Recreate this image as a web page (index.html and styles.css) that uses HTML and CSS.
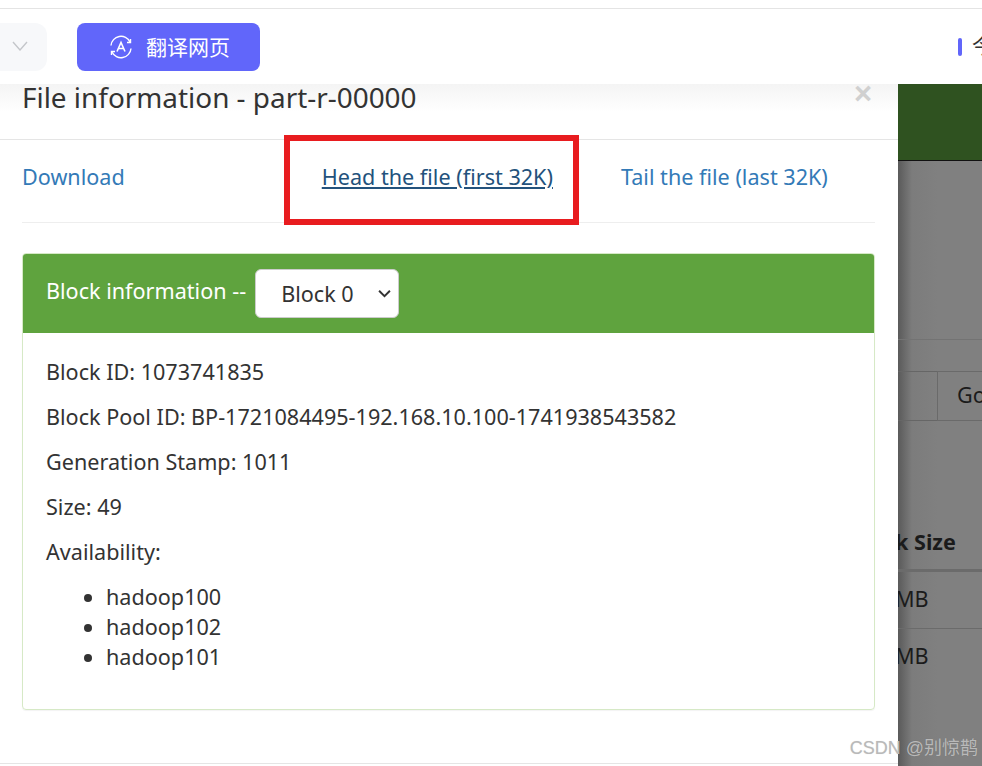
FILE: index.html
```html
<!DOCTYPE html>
<html lang="en">
<head>
<meta charset="utf-8">
<title>File information</title>
<link rel="stylesheet" href="styles.css">
</head>
<body>
<header class="toolbar">
  <div class="toolbar-row">
    <div class="chevron-box">
      <svg class="chevron" viewBox="0 0 16 10" width="16" height="10"><path d="M1 1l7 8 7-8" fill="none" stroke="#c4c6ca" stroke-width="1.4"/></svg>
    </div>
    <button class="translate-btn">
      <svg class="translate-icon" viewBox="0 0 24 24" width="24" height="24" fill="none" stroke="#fff" stroke-width="1.4">
        <path d="M2 10.500A10 10 0 0 1 21 7"/><path d="M22 13.500A10 10 0 0 1 3 17"/>
        <path d="M21.500 4V7.500H18"/><path d="M2.500 20V16.500H6"/>
        <path d="M8 16.500L12 7.500l4 9M9.300 13.500h5.400" stroke-width="1.6"/>
      </svg>
      <span class="translate-label">翻译网页</span>
    </button>
    <div class="ai-mark"></div>
    <span class="ai-text">今</span>
  </div>
</header>
<main class="stage">
  <section class="modal">
    <div class="modal-header">
      <h4 class="modal-title">File information - part-r-00000</h4>
      <span class="close">×</span>
    </div>
    <div class="modal-body">
      <div class="links">
        <a class="link link-download" href="#">Download</a>
        <a class="link link-head" href="#">Head the file (first 32K)</a>
        <a class="link link-tail" href="#">Tail the file (last 32K)</a>
      </div>
      <hr class="rule">
      <div class="panel">
        <div class="panel-heading">
          <span class="panel-title">Block information --</span>
          <div class="select-box"><span>Block 0</span>
            <svg viewBox="0 0 12 8" width="13" height="9"><path d="M1 1.500l5 5 5-5" fill="none" stroke="#333" stroke-width="1.800"/></svg>
          </div>
        </div>
        <div class="panel-body">
          <p>Block ID: 1073741835</p>
          <p>Block Pool ID: BP-1721084495-192.168.10.100-1741938543582</p>
          <p>Generation Stamp: 1011</p>
          <p>Size: 49</p>
          <p>Availability:</p>
          <ul>
            <li>hadoop100</li>
            <li>hadoop102</li>
            <li>hadoop101</li>
          </ul>
        </div>
      </div>
    </div>
    <div class="red-box"></div>
  </section>
  <aside class="backdrop">
    <div class="bd-green"></div>
    <div class="bd-rule-a"></div>
    <div class="bd-input">
      <div class="bd-field"></div>
      <div class="bd-go">Go</div>
    </div>
    <div class="bd-th"><span>k Size</span></div>
    <div class="bd-td bd-td-first"><span>MB</span></div>
    <div class="bd-td"><span>MB</span></div>
  </aside>
</main>
<div class="watermark">CSDN @别惊鹊</div>
</body>
</html>
```
FILE: styles.css
```css
* { box-sizing: border-box; }
html, body { margin: 0; height: 100%; overflow: hidden; }
body {
  width: 982px;
  height: 766px;
  background: #fff;
  font-family: "Noto Sans", "Noto Sans CJK SC", sans-serif;
  color: #333;
  position: relative;
}
.toolbar {
  height: 84px;
  padding-top: 8px;
  background: #fff;
  position: relative;
  z-index: 2;
}
.toolbar-row {
  height: 76px;
  border-top: 1px solid #e4e4e4;
  display: flex;
  align-items: flex-start;
  padding-top: 14px;
  overflow: hidden;
}
.chevron-box {
  flex: none;
  width: 47px;
  height: 48px;
  background: #f7f8fa;
  border-radius: 0 12px 12px 0;
  display: flex;
  align-items: center;
  justify-content: center;
  padding-right: 7px;
  padding-bottom: 2px;
}
.translate-btn {
  flex: none;
  margin-left: 30px;
  width: 183px;
  height: 48px;
  border: 0;
  border-radius: 8px;
  background: #6166fa;
  color: #fff;
  font: 400 21px "Noto Sans CJK SC", sans-serif;
  display: flex;
  align-items: center;
  gap: 13px;
  padding: 0 0 0 32px;
}
.translate-icon { flex: none; }
.translate-label { margin-top: -2px; }
.ai-mark {
  width: 4px;
  height: 18px;
  margin: 15px 0 0 698px;
  background: #6166fa;
  border-radius: 2px;
  flex: none;
}
.ai-text {
  margin: 8px 0 0 10px;
  font: 20px "Noto Sans CJK SC", sans-serif;
  flex: none;
}
.stage {
  display: flex;
  height: 682px;
}
.modal {
  width: 898px;
  flex: none;
  position: relative;
  background: linear-gradient(#f4f4f4, #fff 28px);
  border-bottom: 1px solid #e5e5e5;
  height: 680px;
}
.modal-header {
  height: 56px;
  border-bottom: 1px solid #e5e5e5;
  padding-left: 22px;
  position: relative;
}
.modal-title {
  margin: 0;
  font-size: 27.900px;
  font-weight: 400;
  line-height: 27px;
}
.close {
  position: absolute;
  left: 854px;
  top: -8px;
  font: 700 31px/36px "Liberation Sans", sans-serif;
  color: #d0d0d0;
}
.modal-body { padding: 0 23px 0 22px; }
.links {
  display: flex;
  height: 82px;
  padding-bottom: 9px;
  align-items: center;
  font-size: 21.600px;
}
.link { color: #337ab7; text-decoration: none; }
.link-head { margin-left: 197px; color: #23527c; text-decoration: underline; }
.link-tail { margin-left: 68px; }
.rule { margin: 0; border: 0; border-top: 1px solid #eee; }
.panel {
  margin-top: 30px;
  height: 457px;
  border: 1px solid #d6e9c6;
  border-radius: 4px;
  box-shadow: 0 1px 1px rgba(0, 0, 0, .05);
  overflow: hidden;
}
.panel-heading {
  height: 79px;
  margin: 0 -1px;
  background: #5fa33e;
  color: #fff;
  display: flex;
  align-items: center;
  padding-left: 24px;
  font-size: 21.600px;
}
.panel-title { margin-top: -6px; }
.select-box {
  flex: none;
  width: 144px;
  height: 49px;
  margin: 0 0 0 9px;
  background: #fff;
  border: 1px solid #ccc;
  border-radius: 6px;
  color: #333;
  display: flex;
  align-items: center;
  justify-content: space-between;
  padding: 0 7px 0 25px;
  font-size: 21.600px;
}
.panel-body { padding: 24px 23px 0; font-size: 21.600px; line-height: 30px; }
.panel-body p { margin: 0 0 15px; }
.panel-body ul { margin: 0; padding-left: 60px; }
.red-box {
  position: absolute;
  left: 284px;
  top: 51px;
  width: 295px;
  height: 90px;
  border: 6px solid #e81c1f;
}
.backdrop {
  flex: 1;
  background: linear-gradient(90deg, #5a5a5a, #7c7c7c 14px, #808080 40px);
  font-size: 21.600px;
  color: #1b1b1b;
  overflow: hidden;
}
.bd-green {
  height: 77px;
  background: #2f5220;
  border-bottom: 1px solid #111;
}
.bd-rule-a { height: 1px; margin-top: 178px; background: #737373; }
.bd-input { display: flex; height: 50px; margin-top: 31px; }
.bd-field { width: 39px; flex: none; border-top: 1px solid #666; border-bottom: 1px solid #666; }
.bd-go {
  flex: 1;
  border: 1px solid #6a6a6a;
  border-right: 0;
  padding-left: 19px;
  line-height: 46px;
  white-space: nowrap;
}
.bd-th {
  height: 100px;
  margin-top: 51px;
  padding-top: 55px;
  border-bottom: 3px solid #6b6b6b;
  font-weight: 700;
  white-space: nowrap;
  text-indent: -3px;
  overflow: hidden;
}
.bd-td {
  height: 57px;
  border-bottom: 1px solid #6b6b6b;
  line-height: 54px;
  white-space: nowrap;
  text-indent: -3px;
}
.bd-td:last-child { border-bottom: 0; }
.watermark {
  position: absolute;
  right: 4px;
  bottom: 7px;
  font: 18px "Liberation Sans", "Noto Sans CJK SC", sans-serif;
  color: #b9b9b9;
  text-shadow: 0 0 1px rgba(0,0,0,.15);
}
```
